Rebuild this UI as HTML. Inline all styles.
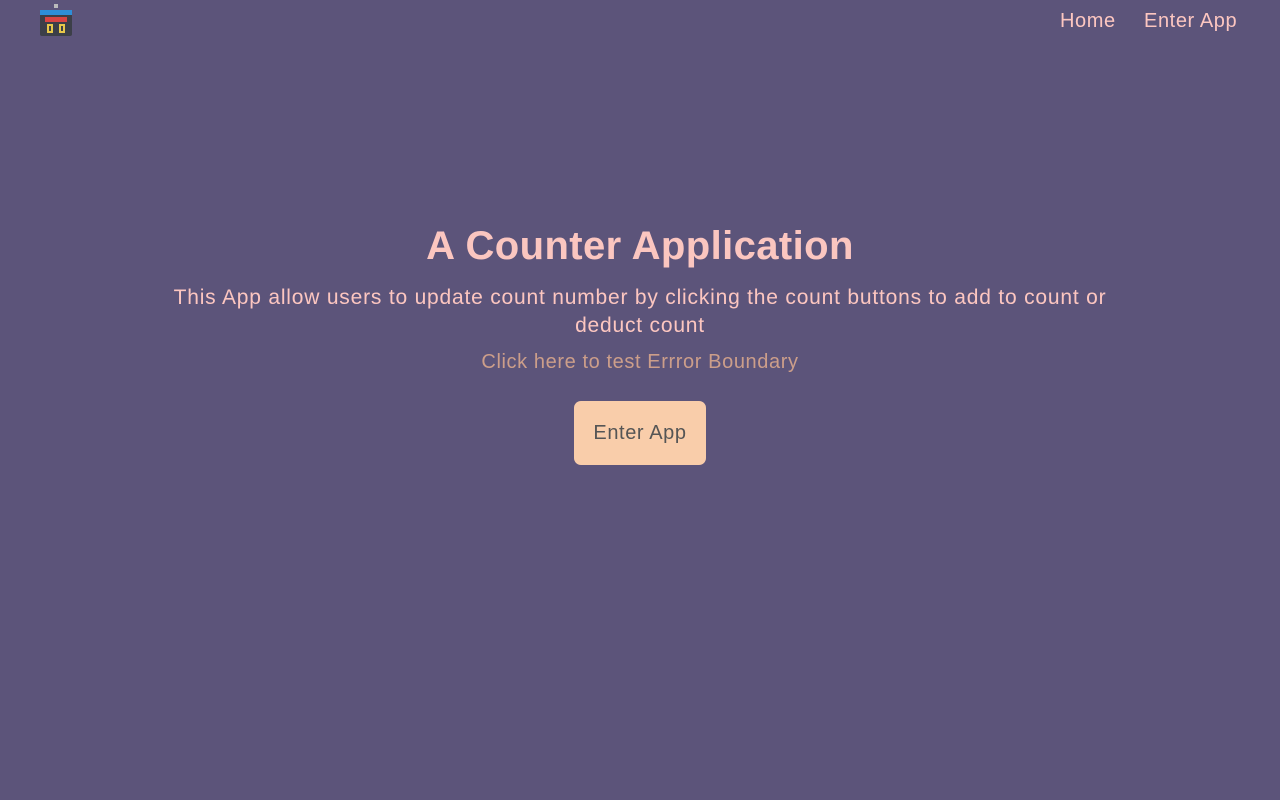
<!DOCTYPE html>
<html><head><style>
body{margin:0;width:1280px;height:800px;background:#5c547a;font-family:"Liberation Sans",sans-serif;color:#fcc6c0;position:relative;overflow:hidden}
.nav{position:absolute;top:10px;font-size:20px;color:#fcc6c0;letter-spacing:0.6px}
h1{position:absolute;top:224px;left:0;width:1280px;text-align:center;margin:0;font-size:40px;font-weight:bold;color:#fbc6c0;letter-spacing:0.4px}
.p{position:absolute;top:284px;left:165px;width:950px;text-align:center;font-size:21px;line-height:28px;letter-spacing:0.8px}
.l{position:absolute;top:351px;width:1280px;text-align:center;font-size:20px;color:#cc9e8a;letter-spacing:0.6px}
.btn{position:absolute;left:574px;top:401px;width:132px;height:64px;border-radius:7px;background:#f9cdaa;color:#555;font-size:20px;text-align:center;line-height:64px;letter-spacing:0.6px}
</style></head><body>
<svg style="position:absolute;left:38px;top:2px" width="36" height="36" viewBox="0 0 36 36">
<rect x="16" y="2" width="4" height="4" fill="#bbb"/>
<rect x="2" y="8" width="32" height="26" rx="2" fill="#3c3f48"/>
<rect x="2" y="8" width="32" height="5" fill="#2e8ed8"/>
<rect x="7" y="15" width="22" height="5" fill="#d84444"/>
<rect x="9" y="22" width="6" height="9" fill="#e8c84a"/><rect x="11" y="24" width="2" height="5" fill="#3c3f48"/>
<rect x="21" y="22" width="6" height="9" fill="#e8c84a"/><rect x="23" y="24" width="2" height="5" fill="#3c3f48"/>
</svg>
<div class="nav" style="left:1060px">Home</div>
<div class="nav" style="left:1144px">Enter App</div>
<h1>A Counter Application</h1>
<div class="p">This App allow users to update count number by clicking the count buttons to add to count or deduct count</div>
<div class="l">Click here to test Errror Boundary</div>
<div class="btn">Enter App</div>
</body></html>
